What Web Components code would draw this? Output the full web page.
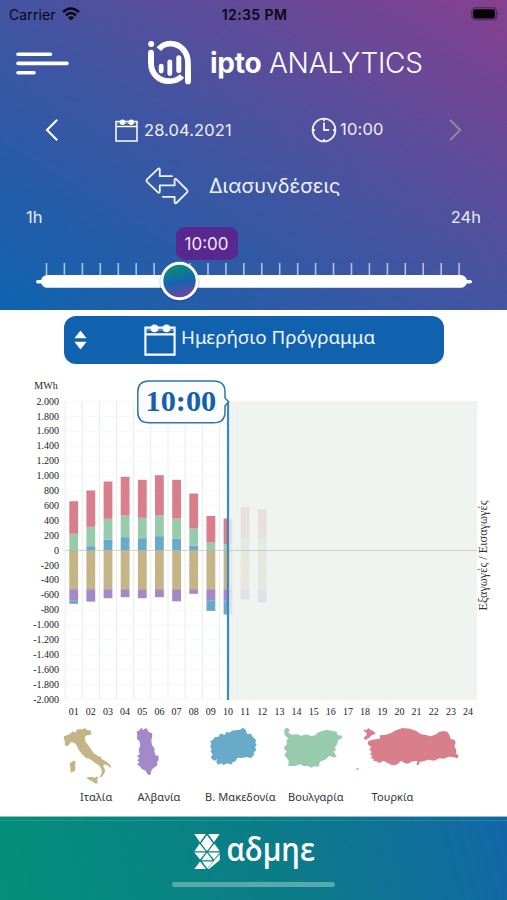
<!DOCTYPE html>
<html lang="el">
<head>
<meta charset="utf-8">
<title>ipto ANALYTICS</title>
<style>
    body
    {
        margin: 0;
        width: 507px;
        height: 900px;
        overflow: hidden;
        background: #fff;
        font-family: Inter, "Noto Sans", sans-serif;
    }
</style>
</head>
<body>
<ipto-app></ipto-app>

<script>
/**
 * base class: clones the static template of the subclass in an open shadow root
 */
class IptoElement extends HTMLElement
{
    constructor()
    {
        super();
        this.attachShadow({mode: "open"});

        const objTemplate = document.createElement("template");
        objTemplate.innerHTML = this.constructor.sTemplate;
        this.shadowRoot.appendChild(objTemplate.content.cloneNode(true));
    }
}

/**
 * phone status bar: carrier, time, battery
 */
class IptoStatusBar extends IptoElement
{
    static sTemplate = `
        <style>
            :host { display: grid; grid-template-columns: 1fr auto 1fr; align-items: center; height: 28px; padding: 0 7px 0 9px; color: #0b0713; font-size: 14px; box-sizing: border-box; }
            .left { display: flex; align-items: center; gap: 6px; letter-spacing: 0.1px; }
            .time { font-weight: 600; letter-spacing: 0.4px; }
            .battery { justify-self: end; }
            svg { display: block; }
        </style>
        <div class="left"><span>Carrier</span>
            <svg width="18" height="14" viewBox="0 0 18 14" fill="none" stroke="#0b0713" stroke-width="2.5">
                <path d="M1 5.2 Q9 -2.2 17 5.2"/><path d="M3.9 8.3 Q9 3.7 14.1 8.3"/>
                <path d="M9 13.6 L5.9 10.5 Q9 8 12.1 10.5 Z" fill="#0b0713" stroke="none"/>
            </svg>
        </div>
        <div class="time">12:35 PM</div>
        <svg class="battery" width="29" height="14" viewBox="0 0 29 14">
            <rect x="0.8" y="0.8" width="24.6" height="12" rx="3.4" fill="none" stroke="#0b0713" stroke-opacity="0.45" stroke-width="1.1"/>
            <rect x="2" y="2.2" width="22" height="9.2" rx="2" fill="#050208"/>
            <path d="M26.8 5 Q28.6 6.8 26.8 8.6 Z" fill="#0b0713" fill-opacity="0.5"/>
        </svg>
    `;
}
customElements.define("ipto-status-bar", IptoStatusBar);

/**
 * menu button + logo + application title
 */
class IptoTitleBar extends IptoElement
{
    static sTemplate = `
        <style>
            :host { display: flex; align-items: center; height: 70px; padding-left: 16px; color: #fff; }
            svg { display: block; }
            .logo { margin-left: 78px; }
            .title { margin-left: 18px; font-size: 28px; font-weight: 300; letter-spacing: -0.25px; white-space: nowrap; }
            ::slotted(b) { font-weight: 700; }
        </style>
        <svg width="54" height="26" viewBox="0 0 54 26" stroke="#fff" stroke-width="3.6" stroke-linecap="round">
            <path d="M2 4.2H34.5M2 13.4H51M2 22.8H18"/>
        </svg>
        <svg class="logo" width="44" height="46" viewBox="0 0 44 46" fill="none" stroke="#fff" stroke-linecap="round">
            <circle cx="3.2" cy="4.1" r="3" fill="#fff" stroke="none"/>
            <path d="M3 12.8V23 C3 34.5 11.5 41.2 21 41.2 C27 41.2 31.5 39 34 36" stroke-width="5.8" stroke-linecap="butt"/>
            <path d="M3 12.6V22" stroke-width="5.8"/>
            <path d="M10.8 9.2 C14 5.4 18 3.7 22 3.7 C32.5 3.7 40 12 40 23 V40.6" stroke-width="5.8" stroke-linecap="butt"/>
            <path d="M40 30V41.4" stroke-width="5.8"/>
            <path d="M13.2 26.2V31" stroke-width="4.8"/>
            <path d="M21.8 21.8V33.6" stroke-width="4.8"/>
            <path d="M30.8 17.8V30.6" stroke-width="5"/>
        </svg>
        <div class="title"><slot></slot></div>
    `;
}
customElements.define("ipto-title-bar", IptoTitleBar);

/**
 * calendar icon, size with --calendar-size
 */
class IptoCalendarIcon extends IptoElement
{
    static sTemplate = `
        <style>
            :host { display: block; width: var(--calendar-size, 22px); height: var(--calendar-size, 22px); }
            svg { display: block; width: 100%; height: 100%; }
        </style>
        <svg viewBox="0 0 32 32" fill="none" stroke="#fff" stroke-width="2.1">
            <path d="M1.4 3.6H30.6V30.6H1.4Z M1.4 10.4H30.6"/>
            <path d="M1.4 6H30.6" stroke-width="1.6" stroke-opacity="0.35"/>
            <circle cx="10.5" cy="4.4" r="3.8" fill="#fff" stroke="none"/>
            <circle cx="22.5" cy="4.4" r="3.8" fill="#fff" stroke="none"/>
        </svg>
    `;
}
customElements.define("ipto-calendar-icon", IptoCalendarIcon);

/**
 * date and hour with previous/next arrows
 */
class IptoDateNav extends IptoElement
{
    static sTemplate = `
        <style>
            :host { display: flex; align-items: center; height: 64px; padding: 0 45px 0 45px; color: #eef0fb; font-size: 16.5px; }
            svg { display: block; }
            .date { display: flex; align-items: center; gap: 6px; margin-left: 57px; width: 196px; }
            .date span { letter-spacing: 0.1px; }
            .hour { display: flex; align-items: center; gap: 3px; flex: 1; letter-spacing: 0.2px; }
            .hour span { margin-top: -2px; }
        </style>
        <svg width="13" height="22" viewBox="0 0 13 22" fill="none" stroke="#fff" stroke-width="2.1"><path d="M12.2 0.8L2 11L12.2 21.2"/></svg>
        <div class="date"><ipto-calendar-icon style="--calendar-size: 23px"></ipto-calendar-icon><span><slot name="date"></slot></span></div>
        <div class="hour">
            <svg width="26" height="26" viewBox="0 0 26 26" fill="none" stroke="#eef0fb" stroke-width="1.8">
                <circle cx="13" cy="13" r="11.4"/>
                <path d="M13 5.5V13H18.2M13 1.5V4M13 22V24.5M1.5 13H4M22 13H24.5"/>
            </svg>
            <span><slot name="hour"></slot></span>
        </div>
        <svg width="13" height="22" viewBox="0 0 13 22" fill="none" stroke="#918797" stroke-width="2"><path d="M1 0.8L11.2 11L1 21.2"/></svg>
    `;
}
customElements.define("ipto-date-nav", IptoDateNav);

/**
 * name of the page with the exchange arrows
 */
class IptoSection extends IptoElement
{
    static sTemplate = `
        <style>
            :host { display: flex; align-items: center; height: 48px; padding-left: 145px; gap: 20px; color: #eef3fd; font-size: 20px; }
            svg { display: block; }
        </style>
        <svg width="44" height="38" viewBox="0 0 44 38" fill="none" stroke="#eef3fd" stroke-width="1.8" stroke-linejoin="round" stroke-linecap="round">
            <path d="M27 9.2H14.8V2.5Q14.6 0.6 13 1.8L2 12.3Q1 13.6 2 14.8L13 25.4Q14.6 26.6 14.8 24.6V18.4H29.6V12.5Q30 11.2 31.2 12.2L42 23Q43 24.2 42 25.4L31.4 36Q29.8 37 29.6 35.2V29.8H17.8"/>
        </svg>
        <slot></slot>
    `;
}
customElements.define("ipto-section", IptoSection);

/**
 * hour slider from 1h to 24h
 */
class IptoHourSlider extends IptoElement
{
    static sTemplate = `
        <style>
            :host { display: block; height: 100px; color: #e6ecfa; }
            .ends { display: flex; justify-content: space-between; padding: 0 26px 0 26px; height: 17px; font-size: 16.5px; line-height: 14px; }
            .bubble { width: 62px; height: 33px; margin-left: 175.5px; border-radius: 9px; background: #58278f; color: #f1e6fb; font-size: 17px; line-height: 34px; text-align: center; }
            svg { display: block; }
        </style>
        <div class="ends"><span>1h</span><span>24h</span></div>
        <div class="bubble"><slot></slot></div>
        <svg width="507" height="50" viewBox="0 260 507 50">
            <defs>
                <linearGradient id="thumb" x1="0.4" y1="0" x2="0.6" y2="1">
                    <stop offset="0.1" stop-color="#0b8a7d"/><stop offset="0.52" stop-color="#1565b0"/><stop offset="1" stop-color="#7b4299"/>
                </linearGradient>
            </defs>
            <g class="ticks" fill="#fff" fill-opacity="0.62"></g>
            <rect x="36" y="280" width="436" height="3.6" rx="1.8" fill="#fff"/>
            <rect x="41" y="275" width="426" height="12.8" rx="6.4" fill="#fff"/>
            <circle cx="179.5" cy="281.8" r="20" fill="#0a3c70" fill-opacity="0.25"/>
            <circle cx="179.5" cy="281" r="17.7" fill="url(#thumb)" stroke="#fff" stroke-width="3"/>
        </svg>
    `;

    connectedCallback()
    {
        let sTicks = "";
        for (let iHour = 0; iHour < 24; iHour++)
            sTicks += `<rect x="${(45.7 + iHour * 17.94).toFixed(1)}" y="263" width="1.6" height="12"/>`;
        this.shadowRoot.querySelector(".ticks").innerHTML = sTicks;
    }
}
customElements.define("ipto-hour-slider", IptoHourSlider);

/**
 * blue select box for the type of schedule
 */
class IptoScheduleSelect extends IptoElement
{
    static sTemplate = `
        <style>
            :host { display: flex; align-items: center; width: 380px; height: 48px; margin: 5.5px 0 0 64px; padding-left: 10px; box-sizing: border-box; border-radius: 12px; background: #1162ae; color: #eef5fd; font-family: "Noto Sans", sans-serif; font-size: 18.8px; }
            svg { display: block; }
            ipto-calendar-icon { margin-left: 57px; }
            span { margin: -5px 0 0 5px; white-space: nowrap; }
        </style>
        <svg width="13" height="20" viewBox="0 0 13 20" fill="#fff"><path d="M6.5 0.5L12.6 8.2H0.4ZM6.5 19.5L12.6 11.8H0.4Z"/></svg>
        <ipto-calendar-icon style="--calendar-size: 32px"></ipto-calendar-icon>
        <span><slot></slot></span>
    `;
}
customElements.define("ipto-schedule-select", IptoScheduleSelect);

/**
 * stacked bars of imports/exports per hour
 */
class IptoExchangeChart extends IptoElement
{
    static sTemplate = `
        <style>
            :host { display: block; height: 357px; font-family: "Liberation Serif", serif; }
            svg { display: block; }
            text { font-family: "Liberation Serif", serif; }
        </style>
        <svg width="507" height="357" viewBox="0 363.5 507 357">
            <g class="grid"></g>
            <g class="bars"></g>
            <rect x="228" y="401" width="249" height="298.5" fill="#ecf2ee" fill-opacity="0.84"/>
            <path d="M65 550H477" stroke="#9fa8a6" stroke-opacity="0.45"/>
            <rect x="226.9" y="401" width="2.2" height="298.5" fill="#3f86c3"/>
            <path d="M149 380.6H213.5Q225 380.6 225 391.5V397.5L228.6 401.3L225 405.5V411.5Q225 422.3 213.5 422.3H149Q137.8 422.3 137.8 411.5V391.5Q137.8 380.6 149 380.6Z" fill="#fafcfd" stroke="#2f74b1" stroke-width="1.5"/>
            <text x="145.5" y="410" font-size="30.3" font-weight="700" fill="#1560ab">10:00</text>
            <text x="34.3" y="388.2" font-size="10" fill="#222">MWh</text>
            <g class="labels" font-size="10" fill="#222"></g>
            <text transform="translate(487 610) rotate(-90)" font-size="12.2" fill="#333" textLength="110">Εξαγωγές / Εισαγωγές</text>
        </svg>
    `;

    //per hour, in MWh. imports: blue, green, red. exports: tan, purple, blue
    #arrHours = [
        [0, 224, 438, 519, 156, 40],
        [58, 260, 487, 519, 166, 0],
        [148, 278, 500, 519, 121, 0],
        [179, 291, 519, 519, 108, 0],
        [165, 274, 510, 519, 121, 0],
        [192, 282, 537, 519, 108, 0],
        [157, 273, 519, 519, 162, 0],
        [67, 232, 466, 519, 62, 0],
        [0, 107, 358, 519, 148, 143],
        [0, 85, 345, 519, 148, 192],
        [0, 165, 421, 519, 135, 0],
        [0, 170, 384, 519, 179, 0]
    ];

    connectedCallback()
    {
        const iLeft = 65.1;
        const iStep = 17.145; //width of one hour
        const iZero = 550;
        const iScale = 0.0745; //pixels per MWh
        const arrColors = ["#68abc8", "#98caad", "#d97f8c", "#c4b486", "#a489c9", "#68abc8"];
        let sGrid = "";
        let sBars = "";
        let sLabels = "";

        for (let iHour = 0; iHour <= 10; iHour++)
            sGrid += `<rect x="${(iLeft - 0.5 + iHour * iStep).toFixed(1)}" y="401" width="1" height="298.5" fill="#e9ebec"/>`;

        for (let iValue = 2000; iValue >= -2000; iValue -= 200)
        {
            const fY = iZero - iValue * iScale;
            let sValue = String(Math.abs(iValue));
            if (sValue.length > 3)
                sValue = sValue[0] + "." + sValue.substring(1);
            sGrid += `<rect x="65" y="${(fY - 0.5).toFixed(1)}" width="412" height="1" fill="#f6f7f7"/>`;
            sLabels += `<text x="59" y="${(fY + 3.1).toFixed(1)}" text-anchor="end">${iValue < 0 ? "-" : ""}${sValue}</text>`;
        }

        this.#arrHours.forEach((arrValues, iHour) =>
        {
            const fX = iLeft + iHour * iStep + 4.2;
            let fUp = iZero;
            let fDown = iZero;
            arrValues.forEach((iValue, iIndex) =>
            {
                const fHeight = iValue * iScale;
                if (iIndex < 3)
                    fUp -= fHeight;
                sBars += `<rect x="${fX.toFixed(1)}" y="${(iIndex < 3 ? fUp : fDown).toFixed(1)}" width="8.8" height="${fHeight.toFixed(1)}" fill="${arrColors[iIndex]}"/>`;
                if (iIndex >= 3)
                    fDown += fHeight;
            });
        });

        for (let iHour = 1; iHour <= 24; iHour++)
            sLabels += `<text x="${(iLeft + (iHour - 0.5) * iStep).toFixed(1)}" y="714" text-anchor="middle">${String(iHour).padStart(2, "0")}</text>`;

        this.shadowRoot.querySelector(".grid").innerHTML = sGrid;
        this.shadowRoot.querySelector(".bars").innerHTML = sBars;
        this.shadowRoot.querySelector(".labels").innerHTML = sLabels;
    }
}
customElements.define("ipto-exchange-chart", IptoExchangeChart);

/**
 * legend: the countries with their outlines
 */
class IptoCountryLegend extends IptoElement
{
    static sTemplate = `
        <style>
            :host { display: block; height: 95px; padding-top: 6px; box-sizing: border-box; }
            .maps { display: flex; align-items: flex-start; height: 61px; padding-left: 63px; }
            .names { display: flex; padding-left: 80px; font-family: "Noto Sans", sans-serif; font-size: 11px; letter-spacing: 0.1px; line-height: 18px; color: #333; white-space: nowrap; }
            .names span { box-sizing: border-box; }
            svg { display: block; }
        </style>
        <div class="maps">
            <svg width="50" height="60" viewBox="69 36 150 180" fill="#c4b486">
                <path d="M72 64L88 58L99 49L105 53L112 43L128 43L136 39L139 44L153 47L154 59L141 61L134 67L137 81L150 98L160 113L173 123L184 126L184 132L198 139L212 151L213 159L204 152L195 148L189 153L196 166L192 177L184 187L179 186L185 175L185 164L177 151L164 143L151 133L137 128L125 116L115 103L108 88L96 80L91 84L83 94L74 90L75 78L71 73Z"/>
                <path d="M89 145L98 139L106 137L106 166L100 170L92 173L91 158Z"/>
                <path d="M141 187L155 186L164 188L175 184L172 194L173 205L166 206L156 199L142 192Z"/>
            </svg>
            <svg width="24" height="50" viewBox="289 36 72 150" fill="#a489c9" style="margin-left: 23px">
                <path d="M291 49L297 48L303 41L307 38L310 46L317 40L323 42L326 50L337 55L338 64L335 76L337 91L344 99L345 113L349 122L356 121L357 136L352 141L353 151L346 156L338 162L334 169L333 179L325 180L321 172L315 165L307 163L300 153L292 149L299 142L293 136L299 129L292 123L300 118L297 104L302 90L299 78L291 71L293 62Z"/>
            </svg>
            <svg width="50" height="40" viewBox="507 36 150 120" fill="#68abc8" style="margin-left: 49px">
                <path d="M511 78L518 75L525 66L536 65L540 56L555 59L559 50L568 53L576 47L590 45L600 44L609 38L617 44L621 56L633 57L639 67L648 75L646 84L650 89L645 97L649 106L641 112L643 118L634 129L619 126L607 129L593 128L586 139L576 143L574 149L563 145L550 150L545 145L534 149L529 141L531 131L524 138L517 133L512 127L518 118L512 110L515 101L510 94L514 88Z"/>
            </svg>
            <svg width="61" height="41" viewBox="729 36 183 123" fill="#98caad" style="margin-left: 24px">
                <path d="M733 43L742 38L749 44L745 54L757 59L770 58L784 62L799 58L813 63L826 61L831 54L846 48L862 44L877 48L890 50L892 60L906 62L907 68L895 75L891 88L884 99L889 106L881 109L890 126L878 127L869 122L855 134L843 138L838 145L837 155L822 154L813 158L803 152L792 154L781 148L765 153L745 153L746 136L737 126L733 121L740 109L731 101L735 94L741 87L739 76L746 72L734 59Z"/>
            </svg>
            <svg width="104" height="45" viewBox="945 36 312 135" fill="#d97f8c" style="margin-left: 11px">
                <path d="M972 43L979 46L985 39L992 45L1001 49L1007 57L996 60L987 69L975 75L971 68L980 61L978 51L971 49Z"/>
                <path d="M985 79L997 74L1012 72L1020 71L1020 61L1038 59L1053 54L1068 46L1088 39L1110 41L1129 48L1142 57L1157 60L1173 64L1188 58L1198 50L1214 48L1223 52L1230 63L1232 72L1244 75L1247 84L1243 92L1249 106L1248 115L1256 123L1252 130L1239 126L1226 125L1212 131L1198 130L1182 137L1165 134L1150 139L1140 140L1135 151L1129 149L1133 138L1117 139L1104 146L1093 144L1084 137L1070 149L1056 151L1043 144L1030 137L1019 144L1008 138L1001 139L1000 131L992 130L997 123L989 116L996 112L988 104L994 96L983 88Z"/>
                <path d="M948 161L956 159L956 163L949 164Z"/>
            </svg>
        </div>
        <div class="names">
            <span style="width: 57.5px">Ιταλία</span><span style="width: 67.5px">Αλβανία</span><span style="width: 83px">Β. Μακεδονία</span><span style="width: 83.5px">Βουλγαρία</span><span>Τουρκία</span>
        </div>
    `;
}
customElements.define("ipto-country-legend", IptoCountryLegend);

/**
 * footer with the company logo and the home indicator
 */
class IptoFooter extends IptoElement
{
    static sTemplate = `
        <style>
            :host { display: flex; flex-direction: column; align-items: center; flex: 1; border-top: 1.5px solid #8fc4c4; box-sizing: border-box; background: linear-gradient(75deg, #04907a 0%, #0b7c88 55%, #1464aa 105%); }
            .logo { display: block; overflow: visible; }
            .home { width: 163px; height: 5px; margin-top: 4px; border-radius: 3px; background: #58a9a9; }
            .line { width: 100%; height: 1px; margin-top: 3px; background: rgba(255, 255, 255, 0.12); }
        </style>
        <div class="line"></div>
        <svg class="logo" width="142" height="57" viewBox="183 821 142 57" fill="#fff">
            <path d="M194.3 834H205.8L200 842.2ZM208.2 834H219.6L214 842.2Z"/>
            <path d="M207 835.2L213 843.2L207 851L201 843.2Z"/>
            <path d="M199.6 843.8L205.8 851.3H194.4ZM214.4 843.8L219.8 851.3H208.2Z"/>
            <path d="M194.4 852.4H205.8L200 859.6ZM208.2 852.4H219.8L214 859.6Z"/>
            <path d="M207 852.8L212.6 860.3H201.4Z"/>
            <path d="M200 861.6L206 869H194.4ZM202 861.4H213L207.4 868.6ZM215 859.4L219.8 854V860L209 869H207.6Z"/>
            <text x="226.5" y="861" font-family="Open Sans" font-size="33" font-weight="600" textLength="88.5" lengthAdjust="spacingAndGlyphs">αδμηε</text>
        </svg>
        <div class="home"></div>
    `;
}
customElements.define("ipto-footer", IptoFooter);

/**
 * the whole screen
 */
class IptoApp extends IptoElement
{
    static sTemplate = `
        <style>
            :host { display: flex; flex-direction: column; width: 507px; height: 900px; }
            header { height: 310px; background: linear-gradient(to top right, #0e64af 0%, #4653a0 52%, #87408f 100%); }
        </style>
        <header>
            <ipto-status-bar></ipto-status-bar>
            <ipto-title-bar><b>ipto</b> ANALYTICS</ipto-title-bar>
            <ipto-date-nav><span slot="date">28.04.2021</span><span slot="hour">10:00</span></ipto-date-nav>
            <ipto-section>Διασυνδέσεις</ipto-section>
            <ipto-hour-slider>10:00</ipto-hour-slider>
        </header>
        <ipto-schedule-select>Ημερήσιο Πρόγραμμα</ipto-schedule-select>
        <ipto-exchange-chart></ipto-exchange-chart>
        <ipto-country-legend></ipto-country-legend>
        <ipto-footer></ipto-footer>
    `;
}
customElements.define("ipto-app", IptoApp);
</script>
</body>
</html>
